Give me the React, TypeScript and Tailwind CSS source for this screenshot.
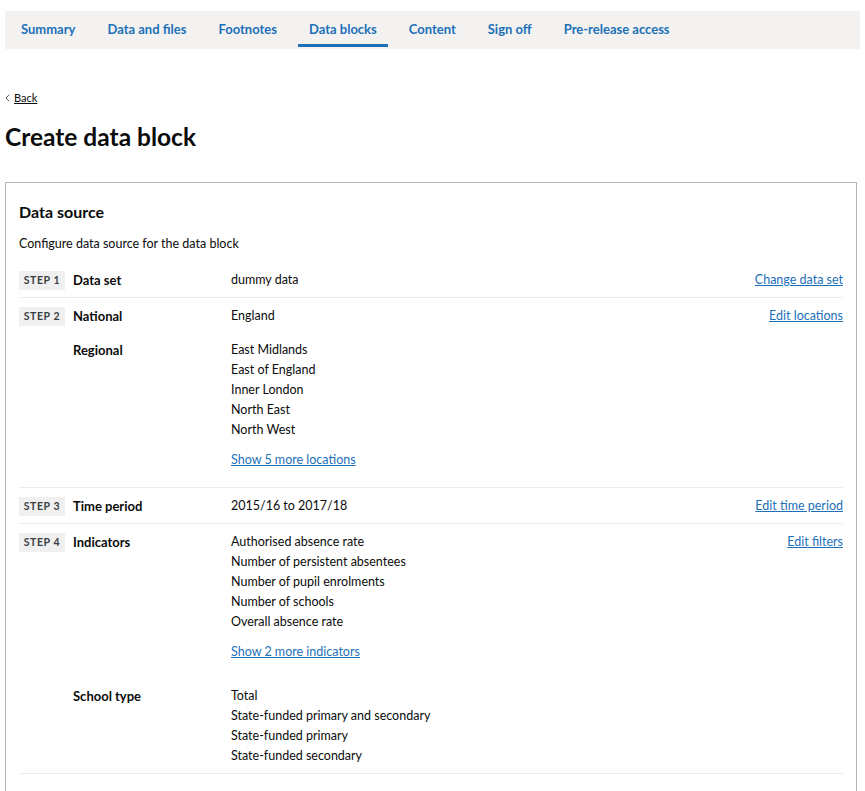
import React from "react";

const tabs = [
  "Summary",
  "Data and files",
  "Footnotes",
  "Data blocks",
  "Content",
  "Sign off",
  "Pre-release access",
];

type Group = { label: string; values: string[]; more?: string };
type Step = { step: number; groups: Group[]; action: string };

const steps: Step[] = [
  { step: 1, groups: [{ label: "Data set", values: ["dummy data"] }], action: "Change data set" },
  {
    step: 2,
    groups: [
      { label: "National", values: ["England"] },
      {
        label: "Regional",
        values: ["East Midlands", "East of England", "Inner London", "North East", "North West"],
        more: "Show 5 more locations",
      },
    ],
    action: "Edit locations",
  },
  { step: 3, groups: [{ label: "Time period", values: ["2015/16 to 2017/18"] }], action: "Edit time period" },
  {
    step: 4,
    groups: [
      {
        label: "Indicators",
        values: [
          "Authorised absence rate",
          "Number of persistent absentees",
          "Number of pupil enrolments",
          "Number of schools",
          "Overall absence rate",
        ],
        more: "Show 2 more indicators",
      },
      {
        label: "School type",
        values: [
          "Total",
          "State-funded primary and secondary",
          "State-funded primary",
          "State-funded secondary",
        ],
      },
    ],
    action: "Edit filters",
  },
];

const StepRow = ({ row }: { row: Step }) => (
  <div className="flex items-start pt-2 pb-[7px] border-b border-[#ececec]">
    <div className="w-[54px] shrink-0 flex items-start">
      <div className="flex items-center justify-center w-[46px] h-[19px] mt-[1px] bg-[#f0f0f0] text-[10.5px] leading-none font-bold tracking-[0.6px] text-[#383f43]">
        STEP {row.step}
      </div>
    </div>
    <div className="flex flex-col gap-[14px] flex-1">
      {row.groups.map((g) => (
        <div key={g.label} className="flex">
          <div className="w-[158px] shrink-0 font-bold text-[13px] leading-5 text-[#0b0c0c]">{g.label}</div>
          <div className="flex flex-col">
            {g.values.map((v) => (
              <div key={v} className="text-[12.5px] leading-5 text-[#0b0c0c]">
                {v}
              </div>
            ))}
            {g.more && (
              <a href="#" className="mt-[10px] mb-[10px] text-[12.5px] leading-5 text-[#1d70b8] underline">
                {g.more}
              </a>
            )}
          </div>
        </div>
      ))}
    </div>
    <a href="#" className="text-[12.5px] leading-5 text-[#1d70b8] underline">
      {row.action}
    </a>
  </div>
);

export default function App() {
  return (
    <div className="min-h-screen bg-white px-[5px] pt-[11px] font-['Lato','Liberation_Sans',sans-serif] text-[#0b0c0c]">
      <nav className="flex h-[38px] bg-[#f3f2f1] pl-[5px] gap-[10px]">
        {tabs.map((t) => (
          <a
            key={t}
            href="#"
            className={
              "flex items-center px-[11px] pt-[4px] text-[13px] font-bold text-[#1d70b8] border-b-[3px] mb-[2px] " +
              (t === "Data blocks" ? "border-[#1d70b8]" : "border-transparent")
            }
          >
            {t}
          </a>
        ))}
      </nav>

      <div className="mt-[41px] flex items-center gap-[4px] text-[11px] leading-4">
        <svg width="5" height="8" viewBox="0 0 5 8" className="text-[#505a5f]">
          <path d="M4.2 0.6 L1 4 L4.2 7.4" fill="none" stroke="currentColor" strokeWidth="1" />
        </svg>
        <a href="#" className="underline text-[#0b0c0c]">
          Back
        </a>
      </div>

      <h1 className="mt-[16px] text-[24.5px] font-bold leading-[30px]">Create data block</h1>

      <div className="mt-[30px] w-[852px] border border-[#b1b4b6] px-[13px] pt-[18px] pb-6">
        <h2 className="text-[16px] font-bold leading-[22px]">Data source</h2>
        <p className="mt-[11px] mb-[8px] text-[12.5px] leading-5">Configure data source for the data block</p>
        {steps.map((s) => (
          <StepRow key={s.step} row={s} />
        ))}
      </div>
    </div>
  );
}
